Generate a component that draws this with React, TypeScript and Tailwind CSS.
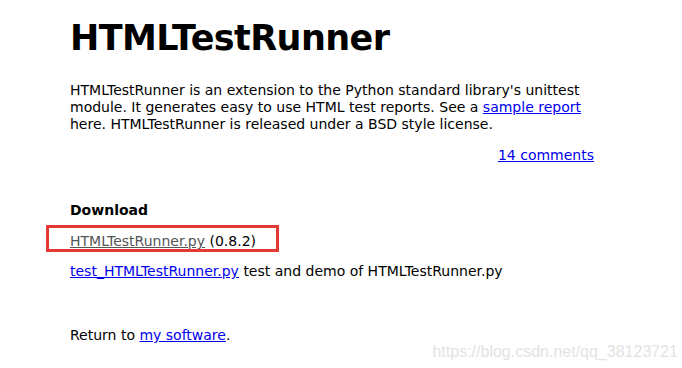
export default function App() {
  return (
    <div className="relative h-[368px] w-[682px] overflow-hidden bg-white font-['DejaVu_Sans',Verdana,sans-serif] text-[14px] leading-[17px] text-black">
      <div className="ml-[70px] w-[524px] pt-[16px]">
        <h1 className="text-[35px] font-bold leading-[44px] tracking-[-0.6px]">HTMLTestRunner</h1>

        <p className="mt-[22px]">
          HTMLTestRunner is an extension to the Python standard library's unittest module. It generates easy to use
          HTML test reports. See a{" "}
          <a href="#" className="text-[#0000ee] underline">
            sample report
          </a>{" "}
          here. HTMLTestRunner is released under a BSD style license.
        </p>

        <div className="mt-[14px] text-right">
          <a href="#" className="text-[#0000ee] underline">
            14 comments
          </a>
        </div>

        <h3 className="mt-[38px] font-bold">Download</h3>

        <div className="relative mt-[14px]">
          <a href="#" className="text-[#555] underline">
            HTMLTestRunner.py
          </a>{" "}
          (0.8.2)
          <div className="absolute left-[-24px] top-[-8px] h-[27px] w-[233px] border-[3px] border-[#e53935]" />
        </div>

        <p className="mt-[13px]">
          <a href="#" className="text-[#0000ee] underline">
            test_HTMLTestRunner.py
          </a>{" "}
          test and demo of HTMLTestRunner.py
        </p>

        <p className="mt-[47px]">
          Return to{" "}
          <a href="#" className="text-[#0000ee] underline">
            my software
          </a>
          .
        </p>
      </div>

      <div className="absolute bottom-[8px] right-[4px] font-['Liberation_Sans',Arial,sans-serif] text-[16px] text-[#e3e3e3]">
        https://blog.csdn.net/qq_38123721
      </div>
    </div>
  );
}
